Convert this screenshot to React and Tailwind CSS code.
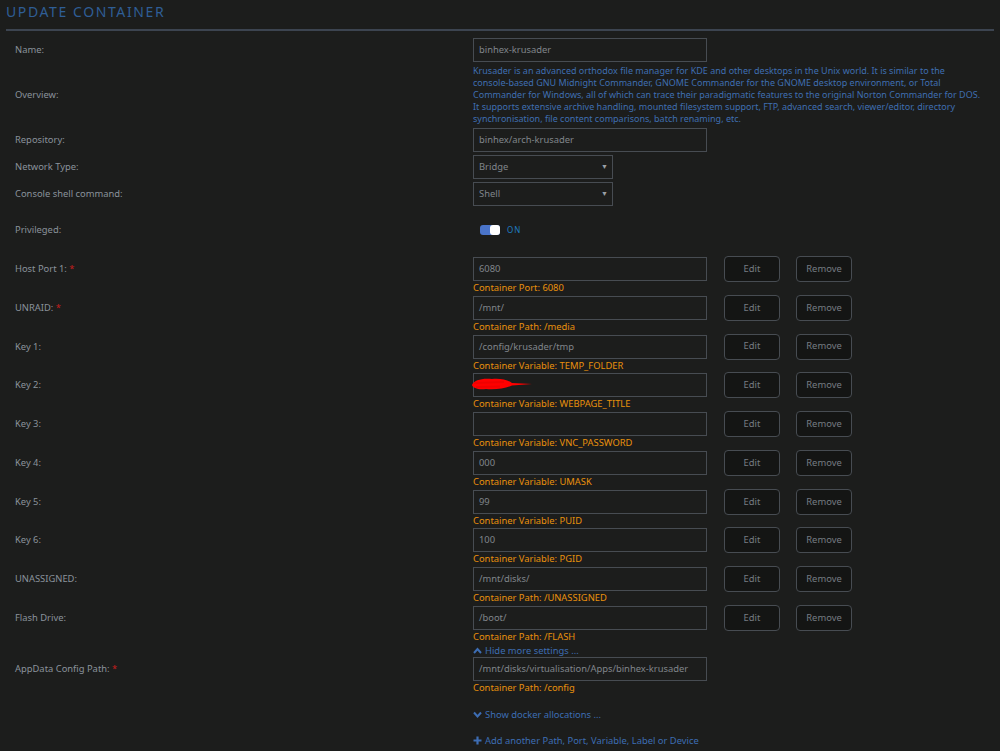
import React from 'react';

const overview = [
  'Krusader is an advanced orthodox file manager for KDE and other desktops in the Unix world. It is similar to the',
  'console-based GNU Midnight Commander, GNOME Commander for the GNOME desktop environment, or Total',
  'Commander for Windows, all of which can trace their paradigmatic features to the original Norton Commander for DOS.',
  'It supports extensive archive handling, mounted filesystem support, FTP, advanced search, viewer/editor, directory',
  'synchronisation, file content comparisons, batch renaming, etc.',
];

const configs = [
  { label: 'Host Port 1:', req: true, value: '6080', desc: 'Container Port: 6080' },
  { label: 'UNRAID:', req: true, value: '/mnt/', desc: 'Container Path: /media' },
  { label: 'Key 1:', value: '/config/krusader/tmp', desc: 'Container Variable: TEMP_FOLDER' },
  { label: 'Key 2:', value: '', redacted: true, desc: 'Container Variable: WEBPAGE_TITLE' },
  { label: 'Key 3:', value: '', desc: 'Container Variable: VNC_PASSWORD' },
  { label: 'Key 4:', value: '000', desc: 'Container Variable: UMASK' },
  { label: 'Key 5:', value: '99', desc: 'Container Variable: PUID' },
  { label: 'Key 6:', value: '100', desc: 'Container Variable: PGID' },
  { label: 'UNASSIGNED:', value: '/mnt/disks/', desc: 'Container Path: /UNASSIGNED' },
  { label: 'Flash Drive:', value: '/boot/', desc: 'Container Path: /FLASH' },
];

function Label({ children, req }) {
  return (
    <div className="w-[467px] shrink-0 pl-[9px] leading-6 text-[#8a929b]">
      {children}
      {req && <span className="text-[#c21d1d]"> *</span>}
    </div>
  );
}

function Input({ value }) {
  return (
    <div className="w-[234px] h-6 border border-[#474c52] px-[5px] leading-[22px] text-[#80858b] whitespace-nowrap overflow-hidden">
      {value}
    </div>
  );
}

function Select({ value }) {
  return (
    <div className="w-[140px] h-6 border border-[#474c52] pl-[5px] pr-[4px] flex items-center justify-between text-[#80858b]">
      <span>{value}</span>
      <span className="text-[7px] text-[#9aa0a6]">▼</span>
    </div>
  );
}

function Btn({ children }) {
  return (
    <div className="w-[56px] h-[26px] -my-px rounded-[4px] border border-[#474c52] bg-[#141514] flex items-center justify-center text-[#767c83]">
      {children}
    </div>
  );
}

function Scribble() {
  return (
    <svg width="64" height="16" viewBox="0 0 64 16" className="absolute left-[-3px] top-[3px]">
      <path d="M2 9 C4 4 12 2 22 3 C30 2 38 4 42 7 L62 8 L42 9.5 C36 12 26 14 16 13 C8 14 3 12 2 9 Z" fill="#ff0000" />
      <path d="M4 7 L34 6 M6 11 L30 10.5" stroke="#f00000" strokeWidth="2" />
    </svg>
  );
}

function ConfigRow({ c }) {
  return (
    <div className="flex mb-[1.78px]">
      <Label req={c.req}>{c.label}</Label>
      <div>
        <div className="flex items-center">
          <div className="relative">
            <Input value={c.value} />
            {c.redacted && <Scribble />}
          </div>
          <div className="ml-[17px]"><Btn>Edit</Btn></div>
          <div className="ml-[16px]"><Btn>Remove</Btn></div>
        </div>
        <div className="leading-[13px] text-[#e8900c]">{c.desc}</div>
      </div>
    </div>
  );
}

function Chevron({ up }) {
  return (
    <svg width="9" height="7" viewBox="0 0 9 7" className="inline-block mr-[3px] align-[0px]">
      <path d={up ? 'M1 6 L4.5 2 L8 6' : 'M1 1.5 L4.5 5.5 L8 1.5'} fill="none" stroke="#3d6db3" strokeWidth="2" />
    </svg>
  );
}

export default function App() {
  return (
    <div className="min-h-screen bg-[#1c1d1c] px-[6px] text-[9.4px]" style={{ fontFamily: '"Noto Sans", "Open Sans", sans-serif' }}>
      <h1 className="pt-[3px] leading-[18px] text-[14px] tracking-[1.6px] text-[#2f5e96]">UPDATE CONTAINER</h1>
      <div className="mt-[8px] h-[2px] bg-[#3c4450]" />

      <div className="mt-[7px] flex">
        <Label>Name:</Label>
        <Input value="binhex-krusader" />
      </div>

      <div className="mt-[3px] flex items-center">
        <Label>Overview:</Label>
        <div className="leading-[12px] text-[9px] text-[#3f6eb1] whitespace-nowrap">
          {overview.map((l) => <div key={l}>{l}</div>)}
        </div>
      </div>

      <div className="mt-[3px] flex">
        <Label>Repository:</Label>
        <Input value="binhex/arch-krusader" />
      </div>

      <div className="mt-[3px] flex">
        <Label>Network Type:</Label>
        <Select value="Bridge" />
      </div>

      <div className="mt-[3px] flex">
        <Label>Console shell command:</Label>
        <Select value="Shell" />
      </div>

      <div className="h-[48px] flex items-center">
        <Label>Privileged:</Label>
        <div className="flex items-center pl-[7px]">
          <div className="w-[20px] h-[10px] rounded-[3px] bg-[#4a74c9] flex justify-end">
            <div className="w-[10px] h-[10px] rounded-[3px] bg-white" />
          </div>
          <span className="ml-[7px] text-[8px] tracking-[1px] text-[#1f7dc3]">ON</span>
        </div>
      </div>

      <div className="mt-[3px]">
        {configs.map((c) => <ConfigRow key={c.label} c={c} />)}
      </div>

      <div className="flex -mt-[1px]">
        <div className="w-[467px] shrink-0" />
        <div className="leading-[13px] text-[#3d6db3]"><Chevron up />Hide more settings ...</div>
      </div>

      <div className="flex">
        <Label req>AppData Config Path:</Label>
        <div>
          <Input value="/mnt/disks/virtualisation/Apps/binhex-krusader" />
          <div className="leading-[13px] text-[#e8900c]">Container Path: /config</div>
        </div>
      </div>

      <div className="flex mt-[14px]">
        <div className="w-[467px] shrink-0" />
        <div className="leading-[13px] text-[#3d6db3]"><Chevron />Show docker allocations ...</div>
      </div>

      <div className="flex mt-[13px] pb-[4px]">
        <div className="w-[467px] shrink-0" />
        <div className="leading-[13px] text-[#3d6db3] flex items-center">
          <svg width="9" height="9" viewBox="0 0 9 9" className="mr-[3px]">
            <path d="M4.5 0.5 V8.5 M0.5 4.5 H8.5" stroke="#3d6db3" strokeWidth="2.2" />
          </svg>
          Add another Path, Port, Variable, Label or Device
        </div>
      </div>
    </div>
  );
}
